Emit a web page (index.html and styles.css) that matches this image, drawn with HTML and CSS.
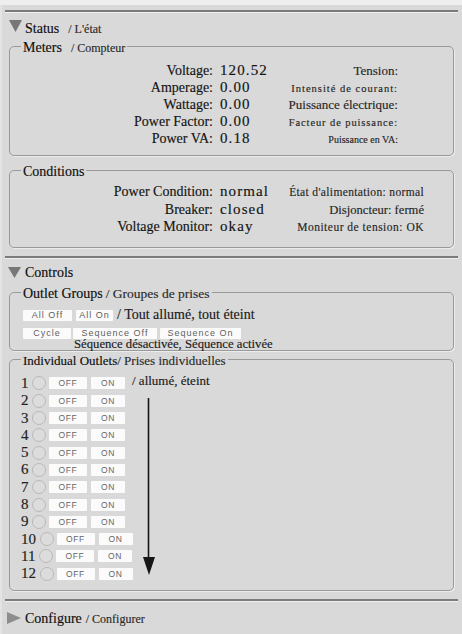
FILE: index.html
```html
<!DOCTYPE html>
<html lang="en">
<head>
<meta charset="utf-8">
<title>Power Strip</title>
<link rel="stylesheet" href="styles.css">
</head>
<body>
<div class="page">
  <hr class="rule">
  <div class="section-head head-status">
    <svg class="tri" width="13" height="12" viewBox="0 0 13 12"><polygon points="0,0 13,0 6.5,12"/></svg>
    <span class="head-title">Status</span><span class="head-sub">/ L'état</span>
  </div>

  <fieldset class="box box-meters">
    <legend><span class="lg-main">Meters</span><span class="lg-sub">/ Compteur</span></legend>
    <div class="grid grid-meters">
      <span class="lbl">Voltage:</span><span class="val">120.52</span><span class="fr fr-13">Tension:</span>
      <span class="lbl">Amperage:</span><span class="val">0.00</span><span class="fr fr-sm">Intensité de courant:</span>
      <span class="lbl">Wattage:</span><span class="val">0.00</span><span class="fr fr-13">Puissance électrique:</span>
      <span class="lbl">Power Factor:</span><span class="val">0.00</span><span class="fr fr-sm fr-tight">Facteur de puissance:</span>
      <span class="lbl">Power VA:</span><span class="val">0.18</span><span class="fr fr-va">Puissance en VA:</span>
    </div>
  </fieldset>

  <fieldset class="box box-cond">
    <legend><span class="lg-main">Conditions</span></legend>
    <div class="grid grid-cond">
      <span class="lbl">Power Condition:</span><span class="val">normal</span><span class="fr fr-mid">État d'alimentation: normal</span>
      <span class="lbl">Breaker:</span><span class="val">closed</span><span class="fr fr-dis">Disjoncteur: fermé</span>
      <span class="lbl">Voltage Monitor:</span><span class="val">okay</span><span class="fr fr-mon">Moniteur de tension: OK</span>
    </div>
  </fieldset>

  <hr class="rule rule-mid">
  <div class="section-head head-controls">
    <svg class="tri" width="13" height="11" viewBox="0 0 13 11"><polygon points="0,0 13,0 6.5,11"/></svg>
    <span class="head-title">Controls</span>
  </div>

  <fieldset class="box box-groups">
    <legend><span class="lg-main">Outlet Groups</span><span class="lg-sub2">/ Groupes de prises</span></legend>
    <div class="btn-row">
      <button class="gbtn w-alloff">All Off</button><button class="gbtn w-allon">All On</button><span class="row-note">/ Tout allumé, tout éteint</span>
    </div>
    <div class="btn-row row-two">
      <button class="gbtn w-cycle">Cycle</button><button class="gbtn w-seqoff">Sequence Off</button><button class="gbtn w-seqon">Sequence On</button>
    </div>
    <div class="seq-note">Séquence désactivée, Séquence activée</div>
  </fieldset>

  <fieldset class="box box-outlets">
    <legend><span class="lg-main lg-13">Individual Outlets</span><span class="lg-sub3">/ Prises individuelles</span></legend>
    <div class="outlets">
      <div class="outlet"><span class="num">1</span><span class="led"></span><button class="obtn off">OFF</button><button class="obtn on">ON</button><span class="outlet-note">/ allumé, éteint</span></div>
      <div class="outlet"><span class="num">2</span><span class="led"></span><button class="obtn off">OFF</button><button class="obtn on">ON</button></div>
      <div class="outlet"><span class="num">3</span><span class="led"></span><button class="obtn off">OFF</button><button class="obtn on">ON</button></div>
      <div class="outlet"><span class="num">4</span><span class="led"></span><button class="obtn off">OFF</button><button class="obtn on">ON</button></div>
      <div class="outlet"><span class="num">5</span><span class="led"></span><button class="obtn off">OFF</button><button class="obtn on">ON</button></div>
      <div class="outlet"><span class="num">6</span><span class="led"></span><button class="obtn off">OFF</button><button class="obtn on">ON</button></div>
      <div class="outlet"><span class="num">7</span><span class="led"></span><button class="obtn off">OFF</button><button class="obtn on">ON</button></div>
      <div class="outlet"><span class="num">8</span><span class="led"></span><button class="obtn off">OFF</button><button class="obtn on">ON</button></div>
      <div class="outlet"><span class="num">9</span><span class="led"></span><button class="obtn off">OFF</button><button class="obtn on">ON</button></div>
      <div class="outlet"><span class="num">10</span><span class="led"></span><button class="obtn off">OFF</button><button class="obtn on">ON</button></div>
      <div class="outlet"><span class="num">11</span><span class="led"></span><button class="obtn off">OFF</button><button class="obtn on">ON</button></div>
      <div class="outlet"><span class="num">12</span><span class="led"></span><button class="obtn off">OFF</button><button class="obtn on">ON</button></div>
      <svg class="arrow" width="14" height="177" viewBox="0 0 14 177"><line x1="6.5" y1="0" x2="6.5" y2="162" stroke="#161616" stroke-width="1.6"/><polygon points="1,159 13,159 7,177" fill="#161616"/></svg>
    </div>
  </fieldset>

  <hr class="rule rule-low">
  <div class="section-head head-config">
    <svg class="tri tri-right" width="14" height="12" viewBox="0 0 14 12"><polygon points="0,0 14,6 0,12"/></svg>
    <span class="head-title">Configure</span><span class="head-sub head-sub-near">/ Configurer</span>
  </div>
</div>
</body>
</html>
```

FILE: styles.css
```css
html {
  background: #eeeeee;
}

body {
  margin: 0;
  font-family: "Liberation Serif", "Times New Roman", Times, serif;
  color: #1a1a1a;
  -webkit-text-stroke: 0.15px currentColor;
}

.page {
  margin-top: 5px;
  padding-top: 5px;
  min-height: 629px;
  box-sizing: border-box;
  background: #d9d9d9;
  box-shadow: inset 2px 0 0 #e3e3e3;
}

/* horizontal rules */
.rule {
  display: block;
  height: 0;
  margin: 0 4px 0 5px;
  border: 0;
  border-top: 2px solid #7b7b7b;
  border-bottom: 1px solid #efefef;
}

.rule-mid {
  margin-top: 8px;
}

.rule-low {
  margin-top: 8px;
}

/* section headers */
.section-head {
  display: flex;
  align-items: flex-start;
  height: 16px;
  line-height: 16px;
  padding-left: 9px;
  white-space: nowrap;
}

.head-status {
  margin-top: 7.5px;
}

.head-controls {
  margin-top: 5.5px;
  padding-left: 8px;
}

.head-config {
  margin-top: 8.5px;
  padding-left: 7px;
}

.tri {
  flex: none;
  fill: #777777;
  margin-right: 3px;
}

.head-status .tri {
  margin-top: -0.5px;
}

.head-controls .tri {
  margin-top: 2px;
  margin-right: 4px;
}

.tri-right {
  fill: #8d8d8d;
  margin-top: 1.5px;
  margin-right: 4px;
}

.head-title {
  font-size: 14px;
  color: #0e0e0e;
}

.head-sub {
  font-size: 12px;
  margin-left: 9px;
  color: #2a2a2a;
}

.head-sub-near {
  margin-left: 4px;
}

/* fieldsets */
.box {
  margin: 0 8px 0 9px;
  border: 1px solid #9a9a9a;
  border-radius: 5px;
  padding: 0 10px 0 11px;
  min-width: 0;
  box-shadow: 1px 1px 0 #ececec;
}

.box legend {
  padding: 0 2px;
  height: 16px;
  line-height: 16px;
  white-space: nowrap;
}

.lg-main {
  font-size: 14px;
  color: #0e0e0e;
}

.lg-13 {
  font-size: 13px;
}

.lg-sub {
  font-size: 12px;
  margin-left: 9px;
  color: #2a2a2a;
}

.lg-sub2 {
  font-size: 13.5px;
  margin-left: 3px;
  color: #2a2a2a;
}

.lg-sub3 {
  font-size: 13px;
  color: #2a2a2a;
}

.box-meters {
  margin-top: 2px;
  padding-top: 7.5px;
  padding-bottom: 8px;
}

.box-cond {
  margin-top: 6.5px;
  padding-top: 4.5px;
  padding-bottom: 11.5px;
}

.box-groups {
  margin-top: 4px;
  padding-top: 8.5px;
  padding-bottom: 0.5px;
}

.box-outlets {
  margin-top: 1px;
  padding-top: 7.35px;
  padding-bottom: 8px;
}

/* status grids */
.grid {
  display: grid;
  align-items: baseline;
  white-space: nowrap;
}

.grid-meters {
  grid-template-columns: 192px 66px 119px;
  grid-auto-rows: 17px;
  line-height: 17px;
}

.grid-cond {
  grid-template-columns: 192px 66px 145px;
  grid-auto-rows: 17.5px;
  line-height: 17.5px;
}

.lbl {
  font-size: 14px;
  text-align: right;
  color: #141414;
}

.val {
  font-size: 15px;
  letter-spacing: 1.1px;
  padding-left: 7px;
  color: #141414;
}

.fr {
  text-align: right;
  color: #262626;
}

.fr-13 {
  font-size: 13px;
}

.fr-sm {
  font-size: 10.5px;
  letter-spacing: 1px;
}

.fr-tight {
  letter-spacing: 0.9px;
}

.fr-va {
  font-size: 10px;
}

.fr-mid {
  font-size: 11.5px;
  letter-spacing: 0.35px;
}

.fr-dis {
  font-size: 12.6px;
}

.fr-mon {
  font-size: 11.5px;
  letter-spacing: 0.5px;
}

/* outlet group buttons */
.btn-row {
  display: flex;
  align-items: center;
  height: 12px;
  padding-left: 2px;
  white-space: nowrap;
}

.row-two {
  margin-top: 6px;
}

.gbtn {
  flex: none;
  height: 11px;
  margin: 0 4px 0 0;
  padding: 0;
  border: 0;
  border-radius: 1px;
  background: #fbfbfb;
  font-family: "Liberation Sans", Arial, sans-serif;
  font-size: 9px;
  line-height: 9px;
  letter-spacing: 1px;
  color: #5e5e5e;
  text-align: center;
  -webkit-text-stroke: 0;
}

.w-alloff { width: 49px; }
.w-allon { width: 37px; }
.w-cycle { width: 48px; margin-right: 2px; }
.w-seqoff { width: 84px; margin-right: 3px; }
.w-seqon { width: 81px; }

.row-note {
  font-size: 14px;
  line-height: 12px;
  color: #1a1a1a;
}

.seq-note {
  margin-top: 1px;
  padding-left: 53px;
  font-size: 12.7px;
  line-height: 9px;
  height: 9px;
  color: #1a1a1a;
  white-space: nowrap;
}

/* individual outlets */
.outlets {
  position: relative;
}

.outlet {
  display: flex;
  align-items: center;
  height: 17.3px;
  white-space: nowrap;
}

.num {
  font-size: 15px;
  line-height: 17px;
  color: #222222;
}

.led {
  flex: none;
  box-sizing: border-box;
  width: 14px;
  height: 14px;
  margin-left: 3.5px;
  border: 1px solid #b9b9b9;
  border-radius: 50%;
  background: #dcdcdc;
}

.obtn {
  flex: none;
  height: 12px;
  padding: 0;
  border: 0;
  border-radius: 1px;
  background: #fbfbfb;
  font-family: "Liberation Sans", Arial, sans-serif;
  font-size: 8.5px;
  line-height: 12px;
  letter-spacing: 0.6px;
  color: #666666;
  text-align: center;
  -webkit-text-stroke: 0;
}

.obtn.off {
  width: 38px;
  margin-left: 3px;
}

.obtn.on {
  width: 34px;
  margin-left: 4px;
}

.outlet-note {
  margin-left: 7px;
  font-size: 13px;
  line-height: 14px;
  margin-top: -4px;
  color: #1a1a1a;
}

.arrow {
  position: absolute;
  left: 121px;
  top: 23.6px;
}
```
